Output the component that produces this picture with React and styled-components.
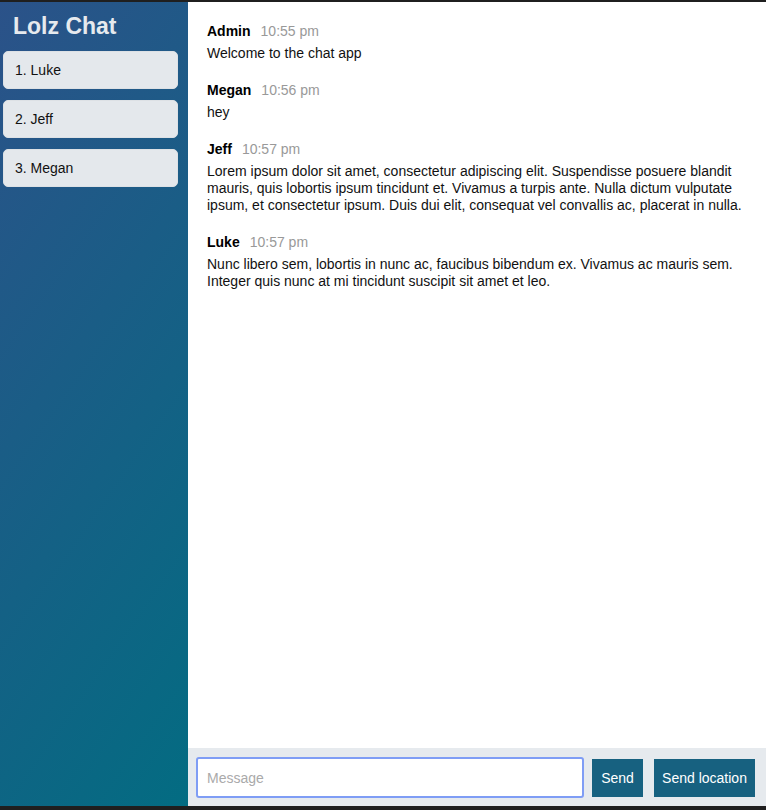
import React from "react";
import styled, { createGlobalStyle } from "styled-components";

const GlobalStyle = createGlobalStyle`
    html, body {
        margin: 0;
        padding: 0;
        background: #1f1f1f;
    }
    body {
        font-family: "Liberation Sans", Arial, sans-serif;
        font-size: 14px;
        color: #111;
    }
`;

// ===== LAYOUT =====
const Chat = styled.div`
    display: flex;
    margin-top: 2px;
    height: 804px;
    width: 766px;
    background: #ffffff;
`;

const Sidebar = styled.aside`
    width: 188px;
    flex-shrink: 0;
    background: linear-gradient(125deg, #2b5289 0%, #036c82 100%);
    display: flex;
    flex-direction: column;
`;

const Brand = styled.h3`
    margin: 11px 0 12px 13px;
    font-size: 23px;
    font-weight: 700;
    line-height: 26px;
    color: #e6eaee;
`;

const UserList = styled.ul`
    list-style: none;
    margin: 0;
    padding: 0 10px 0 3px;
    display: flex;
    flex-direction: column;
    gap: 11px;
`;

const UserItem = styled.li`
    background: #e4e8ec;
    border: 1px solid #dde1e5;
    border-radius: 5px;
    height: 36px;
    padding: 0 11px;
    display: flex;
    align-items: center;
    font-size: 14px;
    color: #111;
`;

const Main = styled.main`
    flex: 1;
    display: flex;
    flex-direction: column;
    min-width: 0;
`;

const Messages = styled.ol`
    list-style: none;
    flex: 1;
    margin: 0;
    padding: 21px 19px 0 19px;
    overflow: hidden;
`;

const Message = styled.li`
    margin-bottom: 20px;
    line-height: 17px;
`;

const MessageTitle = styled.div`
    display: flex;
    align-items: baseline;
    margin-bottom: 5px;
`;

const Author = styled.span`
    font-weight: 700;
    margin-right: 10px;
    color: #000;
`;

const Time = styled.span`
    color: #999;
`;

const Body = styled.p`
    margin: 0;
    color: #111;
`;

const Footer = styled.form`
    background: #e6eaee;
    height: 58px;
    box-sizing: border-box;
    padding: 9px 11px 8px 8px;
    display: flex;
    align-items: center;
`;

const Input = styled.input`
    flex: 1;
    height: 41px;
    box-sizing: border-box;
    border: 2px solid #7f9df5;
    border-radius: 3px;
    padding: 0 9px;
    margin-right: 8px;
    font-family: inherit;
    font-size: 14px;
    outline: none;
    background: #fff;

    &::placeholder {
        color: #aaa;
    }
`;

const Button = styled.button`
    width: ${props => props.$width}px;
    height: 38px;
    background: #176180;
    color: #fff;
    border: none;
    padding: 0;
    font-family: inherit;
    font-size: 14px;
    margin-left: ${props => props.$gap || 0}px;
    cursor: pointer;
`;

// ===== DATA =====
const users = ["Luke", "Jeff", "Megan"];

const messages = [
    { from: "Admin", time: "10:55 pm", text: "Welcome to the chat app" },
    { from: "Megan", time: "10:56 pm", text: "hey" },
    {
        from: "Jeff",
        time: "10:57 pm",
        text: "Lorem ipsum dolor sit amet, consectetur adipiscing elit. Suspendisse posuere blandit mauris, quis lobortis ipsum tincidunt et. Vivamus a turpis ante. Nulla dictum vulputate ipsum, et consectetur ipsum. Duis dui elit, consequat vel convallis ac, placerat in nulla.",
    },
    {
        from: "Luke",
        time: "10:57 pm",
        text: "Nunc libero sem, lobortis in nunc ac, faucibus bibendum ex. Vivamus ac mauris sem. Integer quis nunc at mi tincidunt suscipit sit amet et leo.",
    },
];

// ===== MAIN COMPONENT =====
export default function App() {
    return (
        <>
            <GlobalStyle />
            <Chat>
                <Sidebar>
                    <Brand>Lolz Chat</Brand>
                    <UserList>
                        {users.map((u, i) => (
                            <UserItem key={u}>{i + 1}. {u}</UserItem>
                        ))}
                    </UserList>
                </Sidebar>

                <Main>
                    <Messages>
                        {messages.map((m, i) => (
                            <Message key={i}>
                                <MessageTitle>
                                    <Author>{m.from}</Author>
                                    <Time>{m.time}</Time>
                                </MessageTitle>
                                <Body>{m.text}</Body>
                            </Message>
                        ))}
                    </Messages>

                    <Footer onSubmit={e => e.preventDefault()}>
                        <Input placeholder="Message" />
                        <Button $width={51}>Send</Button>
                        <Button $width={101} $gap={11}>Send location</Button>
                    </Footer>
                </Main>
            </Chat>
        </>
    );
}
